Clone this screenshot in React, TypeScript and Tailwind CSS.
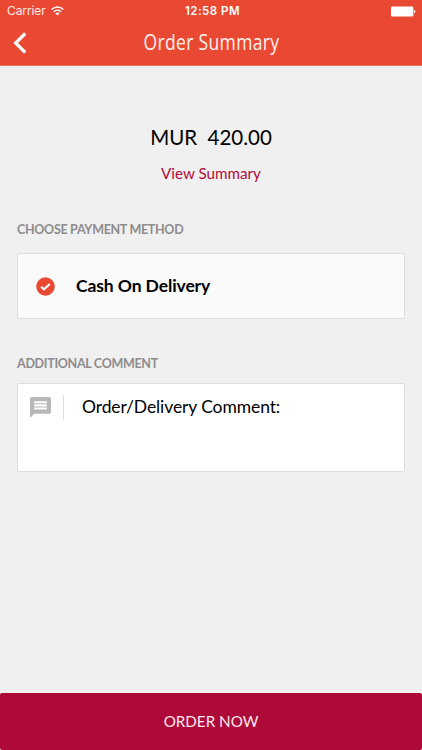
const WifiIcon = () => (
  <svg width="13" height="10" viewBox="0 0 13 10" fill="none" stroke="#fff" strokeWidth="1.4">
    <path d="M0.7 3.5C4 0.2 9 0.2 12.3 3.5" />
    <path d="M2.8 5.7C4.9 3.7 8.1 3.7 10.2 5.7" />
    <path d="M4.4 7.3C5.7 6.1 7.3 6.1 8.6 7.3L6.5 9.5Z" fill="#fff" stroke="none" />
  </svg>
);

const BatteryIcon = () => (
  <svg width="25" height="11" viewBox="0 0 25 11" fill="#fff">
    <rect x="0" y="0.5" width="22.3" height="10" rx="1.2" />
    <path d="M23 4C24.9 4.3 24.9 6.9 23 7.2Z" />
  </svg>
);

const BackIcon = () => (
  <svg width="14" height="22" viewBox="0 0 14 22" fill="none" stroke="#fff" strokeWidth="3.2">
    <path d="M12.2 1.5L2.6 11L12.2 20.5" />
  </svg>
);

const CheckIcon = () => (
  <svg width="19" height="19" viewBox="0 0 19 19">
    <circle cx="9.5" cy="9.5" r="9.3" fill="#e94932" />
    <path d="M5.2 9.7L8 12.3L13.8 6.9" fill="none" stroke="#fff" strokeWidth="2" />
  </svg>
);

const CommentIcon = () => (
  <svg width="21" height="21" viewBox="2 2 20 20" fill="#b8b8b8">
    <path d="M20 2H4c-1.1 0-1.99.9-1.99 2L2 22l4-4h14c1.1 0 2-.9 2-2V4c0-1.1-.9-2-2-2zm-2 12H6v-2h12v2zm0-3H6V9h12v2zm0-3H6V6h12v2z" />
  </svg>
);

const Header = () => {
  return (
    <header className="h-[66px] bg-[#e94932] text-white border-b border-[#e17565]">
      <div className="h-[22px] grid grid-cols-3 items-center pl-[7px] pr-[6px] font-['Inter',sans-serif]">
        <div className="flex items-center gap-[5px]">
          <span className="text-[12px] leading-4 tracking-[-0.1px] text-[#ffe9e5]">Carrier</span>
          <WifiIcon />
        </div>
        <span className="text-center text-[11.5px] leading-4 font-semibold tracking-[0.5px] pl-[2px]">12:58 PM</span>
        <div className="flex justify-end">
          <BatteryIcon />
        </div>
      </div>
      <div className="h-[43px] grid grid-cols-[40px_1fr_40px] items-center">
        <button className="pl-[13px] mb-px">
          <BackIcon />
        </button>
        <h1 className="mb-[3px] pl-px text-center text-[21px] leading-6 tracking-[0.4px] scale-x-[0.835] font-['Open_Sans',sans-serif] text-[#fff0ed]">
          Order Summary
        </h1>
      </div>
    </header>
  );
};

const SectionTitle = ({ children }: { children: string }) => (
  <h2 className="text-[12.5px] leading-4 font-bold tracking-[-0.3px] text-[#8c8c8c]">{children}</h2>
);

const App = () => {
  return (
    <div className="w-[422px] h-[750px] flex flex-col bg-[#f0f0f0] text-black font-['Lato',sans-serif]">
      <Header />
      <main className="flex-1 px-[17px]">
        <div className="pt-[57px] flex flex-col items-center">
          <p className="text-[20.5px] leading-7 whitespace-pre">MUR  420.00</p>
          <a className="mt-[12px] text-[15.2px] leading-5 text-[#b00b3a]">View Summary</a>
        </div>
        <section className="mt-[39px]">
          <SectionTitle>CHOOSE PAYMENT METHOD</SectionTitle>
          <div className="mt-[15px] h-[66px] flex items-center gap-[21px] pl-[18px] bg-[#fafafa] border border-[#dedede] rounded-[2px]">
            <CheckIcon />
            <span className="text-[17.5px] leading-6 font-bold tracking-[-0.1px]">Cash On Delivery</span>
          </div>
        </section>
        <section className="mt-[37px]">
          <SectionTitle>ADDITIONAL COMMENT</SectionTitle>
          <div className="mt-[11px] h-[89px] flex items-start pt-[11px] pl-3 bg-white border border-[#dedede] rounded-[2px]">
            <div className="h-[25px] w-[34px] flex items-center border-r border-[#dedede]">
              <CommentIcon />
            </div>
            <span className="ml-[18px] text-[17.5px] leading-6 tracking-[-0.1px]">Order/Delivery Comment:</span>
          </div>
        </section>
      </main>
      <div className="bg-[#f0f0f0]">
        <button className="w-full h-[57px] rounded-[2px] bg-[#ae0a39] text-[15.2px] text-[#ffe8ef]">
          ORDER NOW
        </button>
      </div>
    </div>
  );
};

export default App;
